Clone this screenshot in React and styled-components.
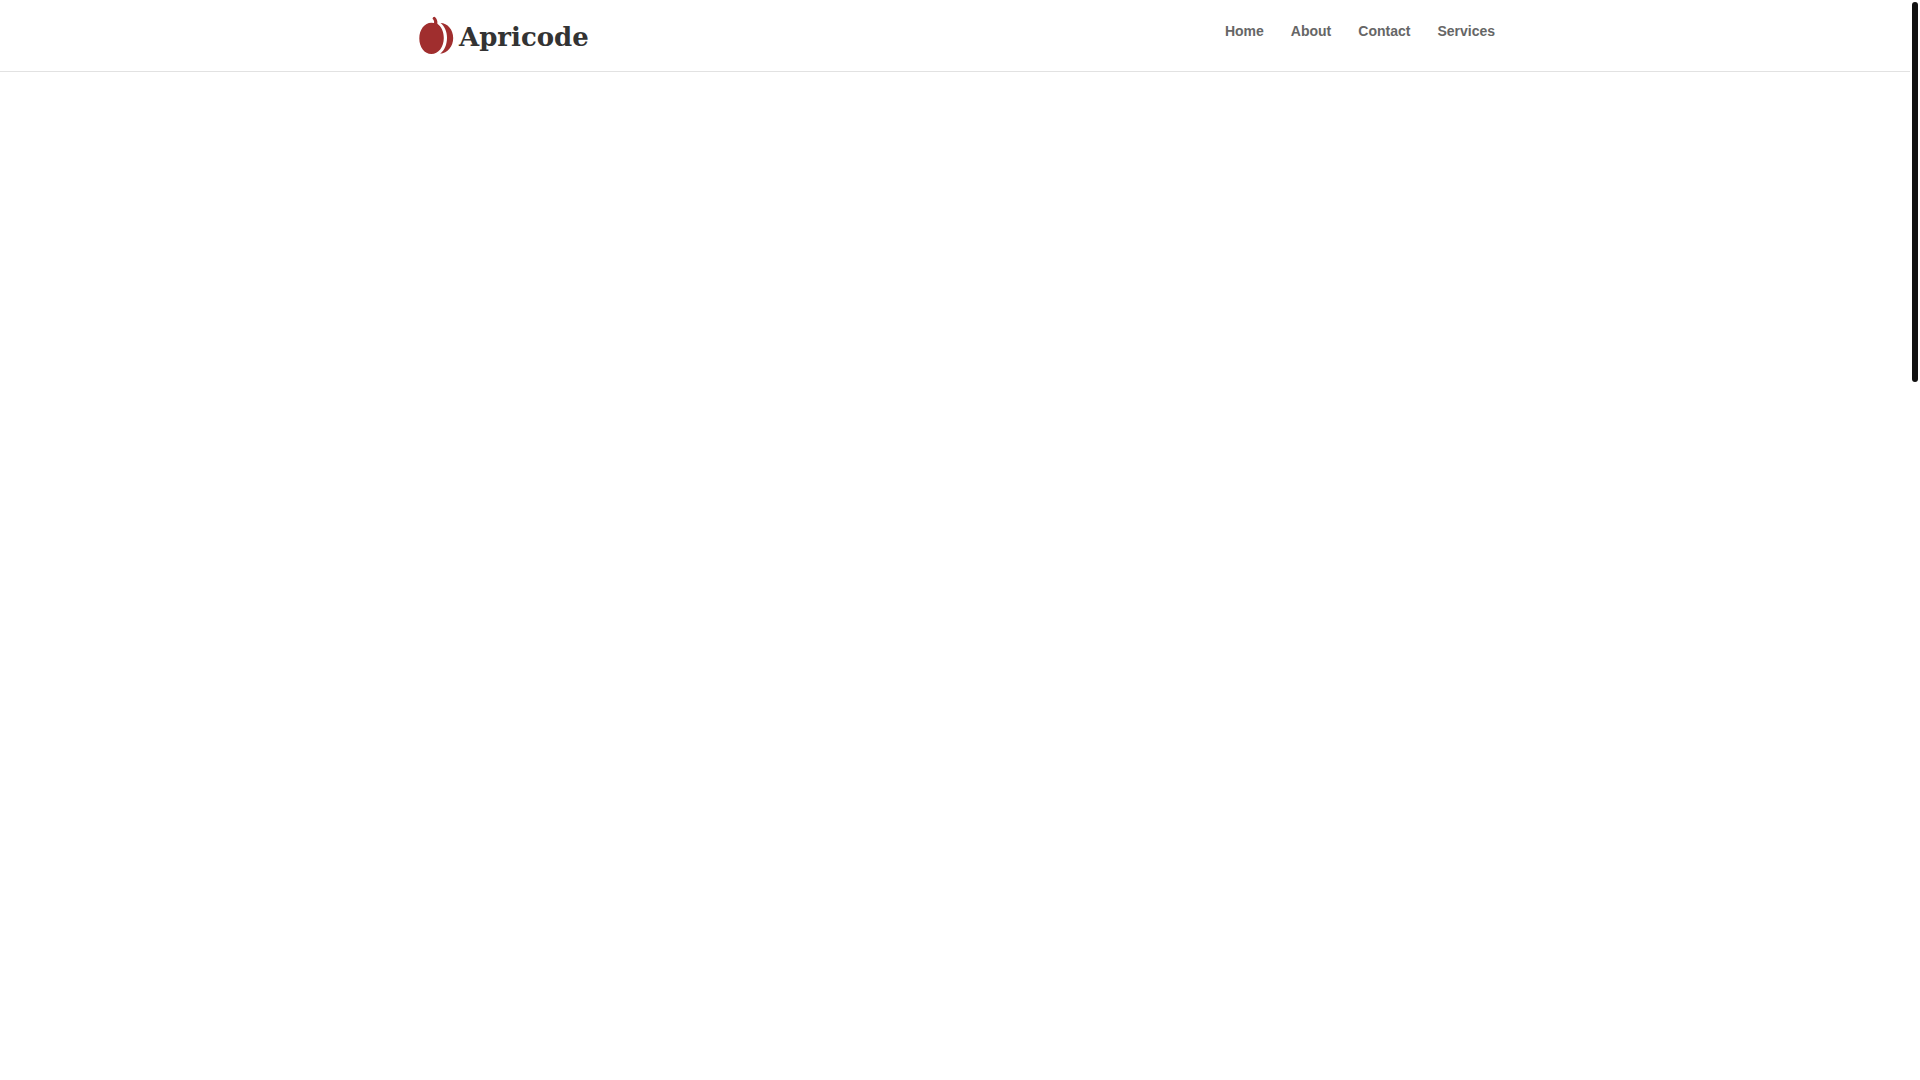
import React from "react";
import styled, { createGlobalStyle } from "styled-components";

const GlobalStyle = createGlobalStyle`
  body {
    margin: 0;
    background: #fff;
    color: #666;
    font-family: "Liberation Sans", Arial, sans-serif;
  }
`;

const Page = styled.div`
  min-height: 100vh;
  padding-right: 10px;
`;

const Header = styled.header`
  border-bottom: 1px solid #e2e2e2;
`;

const HeaderRow = styled.div`
  display: flex;
  justify-content: space-between;
  align-items: flex-start;
  box-sizing: border-box;
  width: 80%;
  max-width: 1080px;
  min-height: 71px;
  margin: 0 auto;
`;

const Logo = styled.a`
  display: flex;
  align-items: flex-start;
  gap: 5px;
  padding: 16px 0 0 4px;
  color: #333;
  text-decoration: none;
`;

const LogoText = styled.span`
  font-family: "DejaVu Serif", serif;
  font-size: 26px;
  font-weight: 700;
  line-height: 42px;
`;

const Nav = styled.nav`
  display: flex;
  gap: 27px;
  padding-top: 23px;
`;

const NavLink = styled.a`
  color: #666;
  font-size: 14px;
  font-weight: 600;
  line-height: 16px;
  text-decoration: none;

  &:hover {
    color: #a02c2c;
  }
`;

const ScrollThumb = styled.div`
  position: fixed;
  top: 2px;
  right: 2px;
  width: 6px;
  height: 380px;
  border-radius: 3px;
  background: #111;
`;

const links = ["Home", "About", "Contact", "Services"];

const Apricot = () => (
  <svg width="35" height="40" viewBox="0 0 35 40" fill="#a02e2e" aria-hidden="true">
    <path d="M15 7C15.400 5.500 15 4.200 13.500 2.700Q13.700 1 15.500 .800C17.700 2.400 18.600 4.700 18.400 7.700C22.300 10.400 24.800 15.700 24.800 22C24.800 31 19.500 38 12.400 38C5.500 38 .300 31 .300 22.400C.300 13.800 5.500 6.800 12.400 6.800Q13.800 6.800 15 7Z" />
    <path d="M21.500 6.900C28.500 7 34.200 13.500 34.200 22C34.200 30.500 28.500 37.200 21.200 37.700C25.500 34.500 28 28.500 28 21.800C28 15.500 25.600 10 21.500 6.900Z" />
  </svg>
);

const App = () => {
  return (
    <Page>
      <GlobalStyle />
      <Header>
        <HeaderRow>
          <Logo href="#home">
            <Apricot />
            <LogoText>Apricode</LogoText>
          </Logo>
          <Nav>
            {links.map((name) => (
              <NavLink key={name} href={`#${name.toLowerCase()}`}>
                {name}
              </NavLink>
            ))}
          </Nav>
        </HeaderRow>
      </Header>
      <ScrollThumb />
    </Page>
  );
};

export default App;
